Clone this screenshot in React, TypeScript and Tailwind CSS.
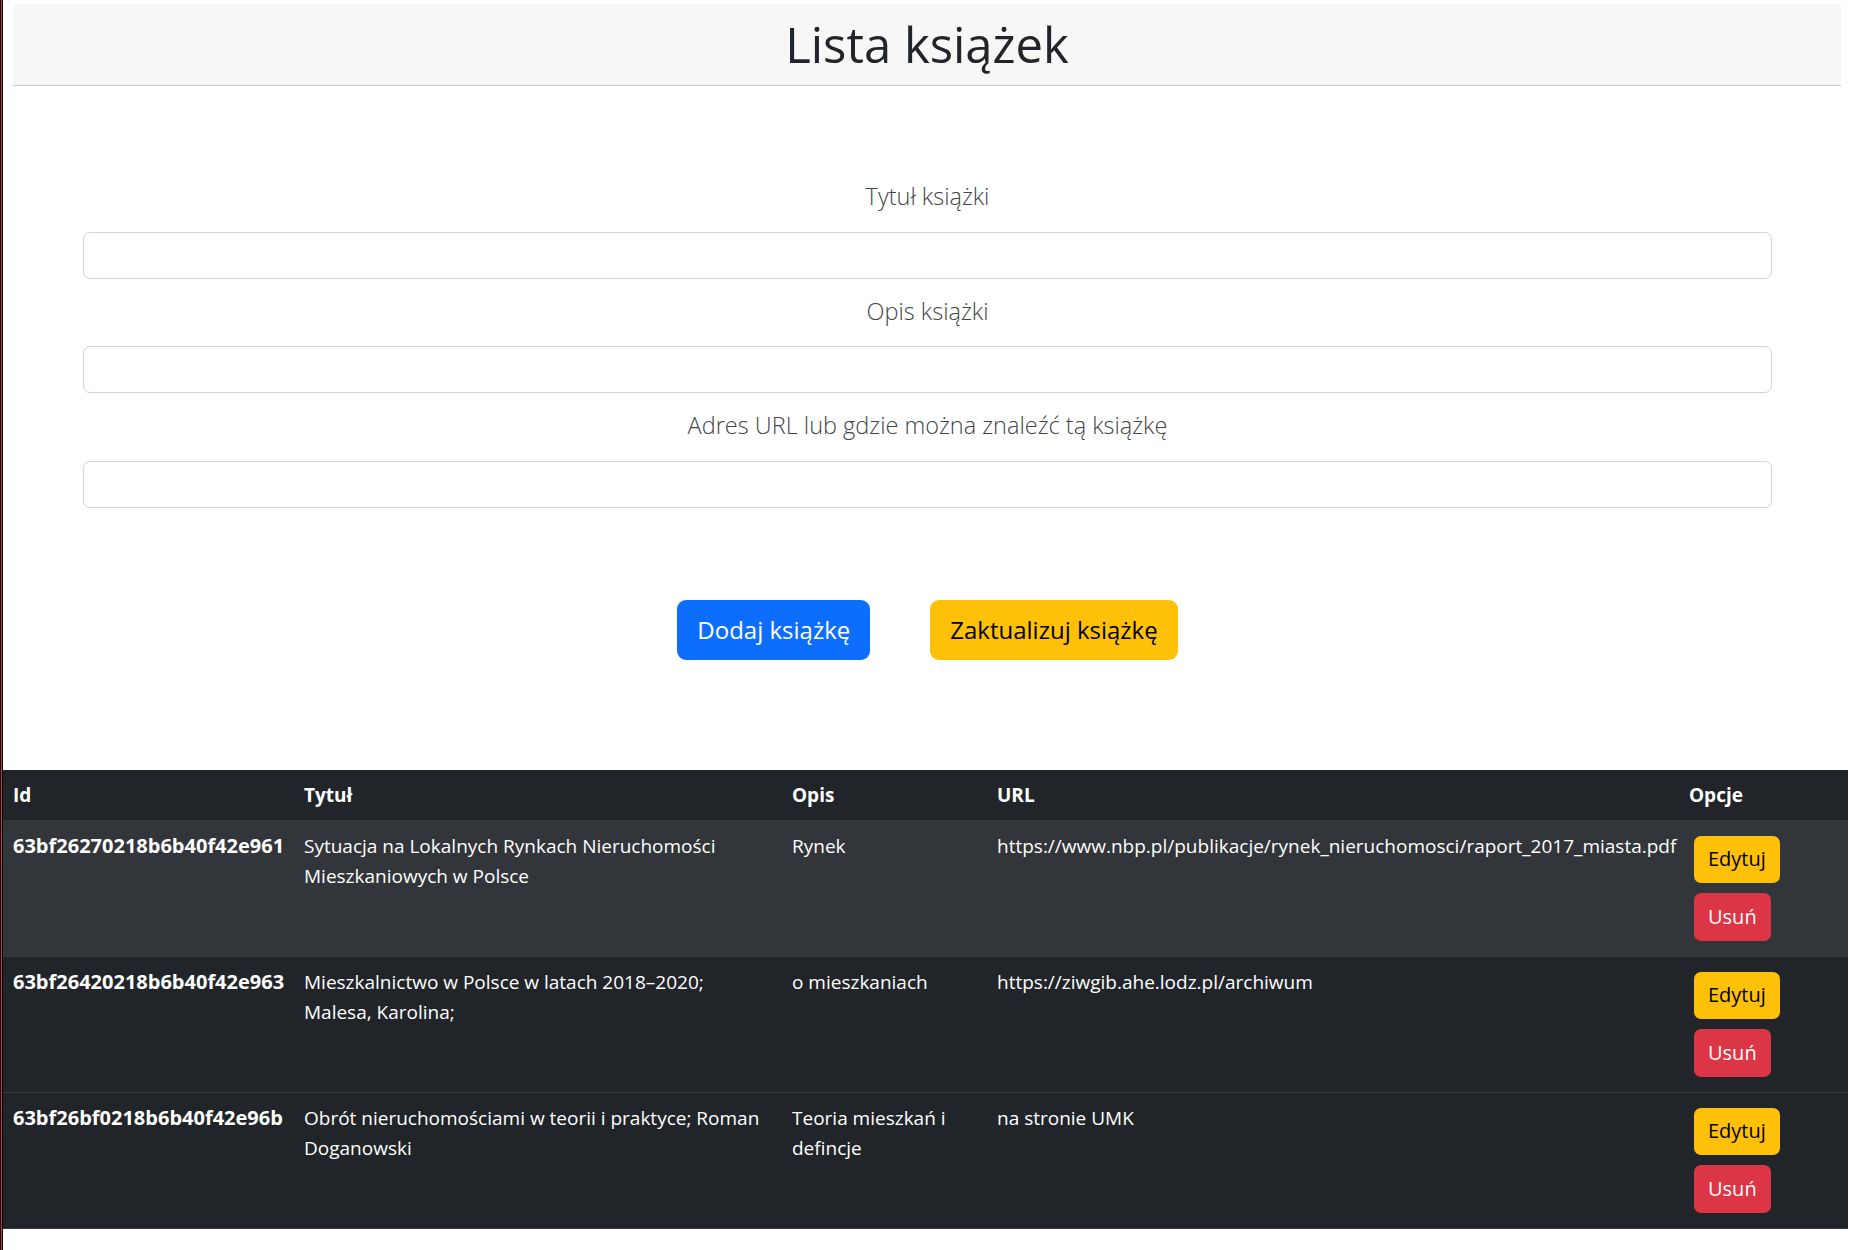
const books = [
  {
    id: '63bf26270218b6b40f42e961',
    title: 'Sytuacja na Lokalnych Rynkach Nieruchomości Mieszkaniowych w Polsce',
    desc: 'Rynek',
    url: 'https://www.nbp.pl/publikacje/rynek_nieruchomosci/raport_2017_miasta.pdf',
  },
  {
    id: '63bf26420218b6b40f42e963',
    title: 'Mieszkalnictwo w Polsce w latach 2018–2020; Malesa, Karolina;',
    desc: 'o mieszkaniach',
    url: 'https://ziwgib.ahe.lodz.pl/archiwum',
  },
  {
    id: '63bf26bf0218b6b40f42e96b',
    title: 'Obrót nieruchomościami w teorii i praktyce; Roman Doganowski',
    desc: 'Teoria mieszkań i defincje',
    url: 'na stronie UMK',
  },
]

const fields = ['Tytuł książki', 'Opis książki', 'Adres URL lub gdzie można znaleźć tą książkę']

export default function App() {
  return (
    <div className="min-h-[1250px] bg-white font-['Open_Sans',sans-serif] text-[#212529] border-l border-black">
      <div className="border-l border-[#cf2f5a]">
        <div className="border-l border-black min-h-[1250px] pt-[4px]">
          {/* header */}
          <div className="ml-[10px] mr-[11px] h-[82px] bg-[#f7f7f7] rounded-tl-md border-b border-[#c9c9c9] flex items-center justify-center">
            <h1 className="text-[49px] font-medium leading-none">Lista książek</h1>
          </div>

          {/* form */}
          <div className="px-[80px] pt-[92px]">
            {fields.map((f, i) => (
              <div key={f} className={i > 0 ? 'mt-[14px]' : ''}>
                <label className="block text-center text-[23.5px] leading-[37.5px] font-light text-[#3f454b]">{f}</label>
                <input className="mt-[16px] block w-full h-[47px] rounded-[7px] border border-[#ced4da] bg-white px-4 outline-none" />
              </div>
            ))}
          </div>

          <div className="mt-[92px] flex justify-center gap-[60px]">
            <button className="h-[60px] px-5 rounded-[9px] bg-[#0d6efd] text-white text-[24px] leading-[37.5px]">Dodaj książkę</button>
            <button className="h-[60px] px-5 rounded-[9px] bg-[#ffc107] text-black text-[24px] leading-[37.5px]">Zaktualizuj książkę</button>
          </div>

          {/* table */}
          <div className="mt-[110px] mr-[4px]">
            <table className="w-full table-fixed border-collapse text-[19px] leading-[30px] text-white">
              <colgroup>
                <col className="w-[291px]" />
                <col className="w-[488px]" />
                <col className="w-[205px]" />
                <col className="w-[692px]" />
                <col />
              </colgroup>
              <thead>
                <tr className="bg-[#212529] border-b border-[#373b3e]">
                  <th className="text-left font-bold p-[10px]">Id</th>
                  <th className="text-left font-bold p-[10px]">Tytuł</th>
                  <th className="text-left font-bold p-[10px]">Opis</th>
                  <th className="text-left font-bold p-[10px]">URL</th>
                  <th className="text-left font-bold p-[10px]">Opcje</th>
                </tr>
              </thead>
              <tbody>
                {books.map((b, i) => (
                  <tr key={b.id} className={`border-b border-[#373b3e] ${i === 0 ? 'bg-[#323539]' : 'bg-[#212529]'}`}>
                    <th className="text-left align-top font-bold p-[10px] whitespace-nowrap text-[20px]">{b.id}</th>
                    <td className="align-top p-[10px]">{b.title}</td>
                    <td className="align-top p-[10px]">{b.desc}</td>
                    <td className="align-top p-[10px] whitespace-nowrap">{b.url}</td>
                    <td className="align-top p-[10px]">
                      <div className="flex flex-col items-start">
                        <button className="m-[5px] h-[47px] px-[14px] rounded-[7px] bg-[#ffc107] text-black text-[20px]">Edytuj</button>
                        <button className="m-[5px] h-[48px] px-[14px] rounded-[7px] bg-[#dc3545] text-white text-[20px]">Usuń</button>
                      </div>
                    </td>
                  </tr>
                ))}
              </tbody>
            </table>
          </div>
        </div>
      </div>
    </div>
  )
}
